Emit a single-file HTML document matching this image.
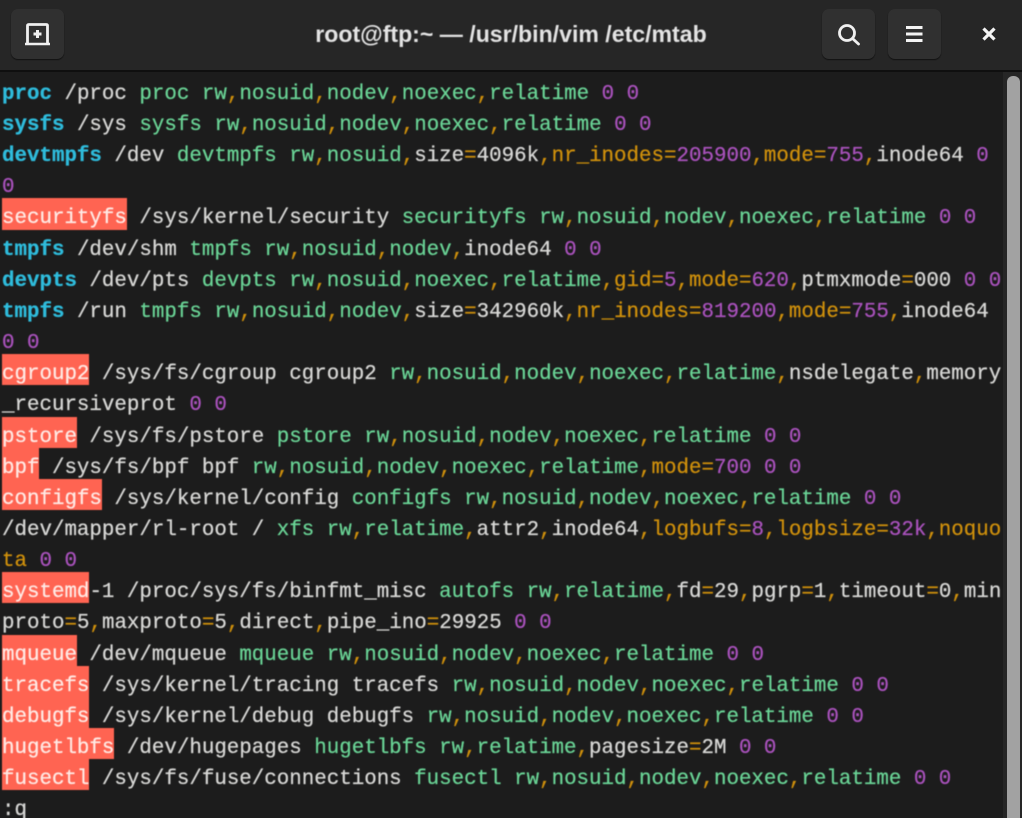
<!DOCTYPE html>
<html><head><meta charset="utf-8"><style>
html,body{margin:0;padding:0;background:#1c1c1c}
#w{position:relative;width:1022px;height:818px;overflow:hidden;background:#1c1c1c}
#hd{position:absolute;left:0;top:0;width:1022px;height:70px;background:#262626;border-bottom:2px solid #0f0f0f}
.bt{position:absolute;top:9px;width:53px;height:50px;border-radius:7px;background:#303030;box-shadow:0 1px 1px #111}
#ti{position:absolute;left:200px;width:622px;top:19px;text-align:center;color:#e4e4e4;font:bold 23.100px/30px "Liberation Sans",sans-serif;white-space:nowrap;filter:blur(.4px)}
svg{position:absolute;filter:blur(.3px)}
#t{position:absolute;left:0;top:78.800px;width:1003px;font:20.820px/31.170px "Liberation Mono",monospace;color:#d8d8d6;-webkit-text-stroke:.25px;filter:blur(.4px)}
#t div{height:31.170px;padding-left:2px;white-space:pre}
#t b{color:#2fbcdc;font-weight:bold}
#t i{color:#cf900c;font-style:normal}
#t u{color:#6ad496;text-decoration:none}
#t s{color:#a952bc;text-decoration:none}
#t mark{display:inline-block;position:relative;height:31.170px;vertical-align:top;background:none;color:#ffeae5}
#t mark::before{content:"";position:absolute;left:0;right:0;top:-5px;height:31.170px;background:#ff6452;z-index:-1}
#tr{position:absolute;left:1003px;top:72px;width:19px;height:746px;background:#262626}
#th{position:absolute;left:1007px;top:76px;width:13px;height:760px;border-radius:6px;background:#a2a2a2}
</style></head><body><div id="w">
<div id="tr"></div><div id="th"></div>
<div id="t">
<div><b>proc</b> /proc <u>proc rw</u><i>,</i><u>nosuid</u><i>,</i><u>nodev</u><i>,</i><u>noexec</u><i>,</i><u>relatime</u> <s>0 0</s></div>
<div><b>sysfs</b> /sys <u>sysfs rw</u><i>,</i><u>nosuid</u><i>,</i><u>nodev</u><i>,</i><u>noexec</u><i>,</i><u>relatime</u> <s>0 0</s></div>
<div><b>devtmpfs</b> /dev <u>devtmpfs rw</u><i>,</i><u>nosuid</u><i>,</i>size<i>=</i>4096k<i>,nr_inodes=</i><s>205900</s><i>,mode=</i><s>755</s><i>,</i>inode64 <s>0</s></div>
<div><s>0</s></div>
<div><mark>securityfs</mark> /sys/kernel/security <u>securityfs rw</u><i>,</i><u>nosuid</u><i>,</i><u>nodev</u><i>,</i><u>noexec</u><i>,</i><u>relatime</u> <s>0 0</s></div>
<div><b>tmpfs</b> /dev/shm <u>tmpfs rw</u><i>,</i><u>nosuid</u><i>,</i><u>nodev</u><i>,</i>inode64 <s>0 0</s></div>
<div><b>devpts</b> /dev/pts <u>devpts rw</u><i>,</i><u>nosuid</u><i>,</i><u>noexec</u><i>,</i><u>relatime</u><i>,gid=</i><s>5</s><i>,mode=</i><s>620</s><i>,</i>ptmxmode<i>=</i>000 <s>0 0</s></div>
<div><b>tmpfs</b> /run <u>tmpfs rw</u><i>,</i><u>nosuid</u><i>,</i><u>nodev</u><i>,</i>size<i>=</i>342960k<i>,nr_inodes=</i><s>819200</s><i>,mode=</i><s>755</s><i>,</i>inode64</div>
<div><s>0 0</s></div>
<div><mark>cgroup2</mark> /sys/fs/cgroup cgroup2 <u>rw</u><i>,</i><u>nosuid</u><i>,</i><u>nodev</u><i>,</i><u>noexec</u><i>,</i><u>relatime</u><i>,</i>nsdelegate<i>,</i>memory</div>
<div>_recursiveprot <s>0 0</s></div>
<div><mark>pstore</mark> /sys/fs/pstore <u>pstore rw</u><i>,</i><u>nosuid</u><i>,</i><u>nodev</u><i>,</i><u>noexec</u><i>,</i><u>relatime</u> <s>0 0</s></div>
<div><mark>bpf</mark> /sys/fs/bpf bpf <u>rw</u><i>,</i><u>nosuid</u><i>,</i><u>nodev</u><i>,</i><u>noexec</u><i>,</i><u>relatime</u><i>,mode=</i><s>700</s> <s>0 0</s></div>
<div><mark>configfs</mark> /sys/kernel/config <u>configfs rw</u><i>,</i><u>nosuid</u><i>,</i><u>nodev</u><i>,</i><u>noexec</u><i>,</i><u>relatime</u> <s>0 0</s></div>
<div>/dev/mapper/rl-root / <u>xfs rw</u><i>,</i><u>relatime</u><i>,</i>attr2<i>,</i>inode64<i>,logbufs=</i><s>8</s><i>,logbsize=</i><s>32k</s><i>,noquo</i></div>
<div><i>ta</i> <s>0 0</s></div>
<div><mark>systemd</mark>-1 /proc/sys/fs/binfmt_misc <u>autofs rw</u><i>,</i><u>relatime</u><i>,</i>fd<i>=</i>29<i>,</i>pgrp<i>=</i>1<i>,</i>timeout<i>=</i>0<i>,</i>min</div>
<div>proto<i>=</i>5<i>,</i>maxproto<i>=</i>5<i>,</i>direct<i>,</i>pipe_ino<i>=</i>29925 <s>0 0</s></div>
<div><mark>mqueue</mark> /dev/mqueue <u>mqueue rw</u><i>,</i><u>nosuid</u><i>,</i><u>nodev</u><i>,</i><u>noexec</u><i>,</i><u>relatime</u> <s>0 0</s></div>
<div><mark>tracefs</mark> /sys/kernel/tracing tracefs <u>rw</u><i>,</i><u>nosuid</u><i>,</i><u>nodev</u><i>,</i><u>noexec</u><i>,</i><u>relatime</u> <s>0 0</s></div>
<div><mark>debugfs</mark> /sys/kernel/debug debugfs <u>rw</u><i>,</i><u>nosuid</u><i>,</i><u>nodev</u><i>,</i><u>noexec</u><i>,</i><u>relatime</u> <s>0 0</s></div>
<div><mark>hugetlbfs</mark> /dev/hugepages <u>hugetlbfs rw</u><i>,</i><u>relatime</u><i>,</i>pagesize<i>=</i>2M <s>0 0</s></div>
<div><mark>fusectl</mark> /sys/fs/fuse/connections <u>fusectl rw</u><i>,</i><u>nosuid</u><i>,</i><u>nodev</u><i>,</i><u>noexec</u><i>,</i><u>relatime</u> <s>0 0</s></div>
<div>:q</div>
</div>
<div id="hd"></div>
<div class="bt" style="left:11px"></div>
<div class="bt" style="left:822px"></div>
<div class="bt" style="left:888px"></div>
<div id="ti">root@ftp:~ — /usr/bin/vim /etc/mtab</div>
<svg style="left:24px;top:22px" width="28" height="26" viewBox="0 0 28 26" fill="none" stroke="#f0f0f0"><path d="M3.500 21V3.500Q3.500 2.500 5 2.500H22Q23.500 2.500 23.500 3.500V21" stroke-width="2.800"/><path d="M1 22H26" stroke-width="2.600"/><path d="M13.500 8V16M9.500 12H17.500" stroke-width="3"/></svg>
<svg style="left:836px;top:22px" width="26" height="26" viewBox="0 0 26 26" fill="none" stroke="#f0f0f0" stroke-width="2.800"><circle cx="11" cy="11" r="7.500"/><path d="M16.500 16.500L22.500 22" stroke-linecap="round"/></svg>
<svg style="left:904px;top:24px" width="22" height="20" viewBox="0 0 22 20" fill="none" stroke="#f4f4f4" stroke-width="3"><path d="M2 3.500H18.500M2 10H18.500M2 16.500H18.500"/></svg>
<svg style="left:980px;top:25px" width="18" height="18" viewBox="0 0 18 18" fill="none" stroke="#f4f4f4" stroke-width="3.200"><path d="M3.500 3.500L14.500 14.500M14.500 3.500L3.500 14.500"/></svg>
</div></body></html>
